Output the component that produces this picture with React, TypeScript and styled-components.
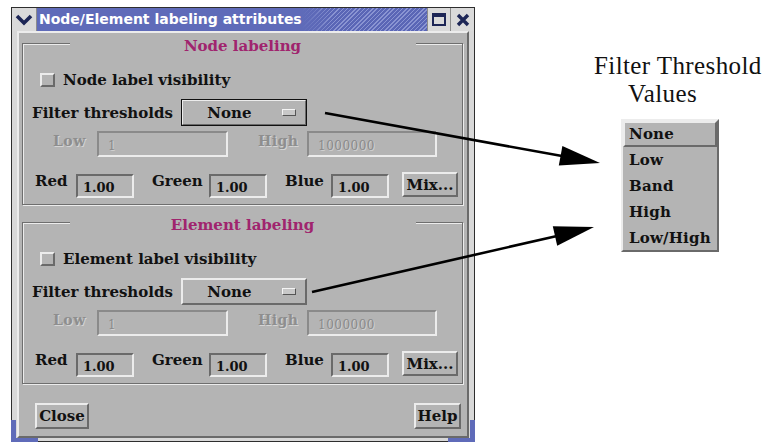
import styled, { createGlobalStyle } from 'styled-components';

const GlobalStyle = createGlobalStyle`
  html, body {
    margin: 0;
    padding: 0;
    background: #ffffff;
  }
  body {
    width: 766px;
    height: 444px;
    overflow: hidden;
  }
`;

const GRAY = '#b4b4b4';
const LIGHT = '#ececec';
const DARK = '#6a6a6a';
const NAVY = '#1d2656';
const BLUE = '#5f6bb9';
const LABEL_FONT = `bold 15px "DejaVu Serif", serif`;

const Page = styled.div`
  position: relative;
  display: flex;
  align-items: flex-start;
  width: 766px;
  height: 444px;
`;

const Window = styled.div`
  position: relative;
  margin: 7px 0 0 11px;
  width: 462px;
  border: 1px solid #2e2e2e;
  background: #d8d8d8;
  &::before,
  &::after {
    content: '';
    position: absolute;
    bottom: -1px;
    width: 27px;
    height: 22px;
    box-sizing: border-box;
    border-bottom: 4px solid ${BLUE};
  }
  &::before {
    left: -1px;
    border-left: 5px solid ${BLUE};
  }
  &::after {
    right: -1px;
    border-right: 5px solid ${BLUE};
  }
`;

const TitleBar = styled.div`
  display: flex;
  height: 23px;
  background: ${BLUE};
`;

const TitleButton = styled.div<{ $w: number; $left?: boolean }>`
  width: ${(p) => p.$w}px;
  flex: none;
  display: flex;
  align-items: center;
  justify-content: center;
  background: #dadada;
  border-left: ${(p) => (p.$left ? 'none' : '1px solid #8c8c8c')};
  border-right: ${(p) => (p.$left ? '1px solid #8c8c8c' : 'none')};
`;

const TitleText = styled.div`
  padding-left: 2px;
  color: #ffffff;
  font: bold 14px 'DejaVu Sans', sans-serif;
  line-height: 23px;
  white-space: nowrap;
  background: ${BLUE};
`;

const Hatch = styled.div`
  flex: 1;
  background: linear-gradient(90deg, ${BLUE} 0%, rgba(95, 107, 185, 0) 25%),
    repeating-linear-gradient(135deg, #5a66b6 0 2px, #8a94d2 2px 3px);
`;

const Frame = styled.div`
  padding: 0 5px 3px 5px;
`;

const Dialog = styled.div`
  background: ${GRAY};
  border: 2px solid;
  border-color: ${LIGHT} ${DARK} ${DARK} ${LIGHT};
  padding-bottom: 7px;
`;

const Group = styled.section<{ $top: number }>`
  margin: ${(p) => p.$top}px 4px 0 3px;
  border: 1px solid #6e6e6e;
  box-shadow: inset 1px 1px 0 ${LIGHT}, 1px 1px 0 ${LIGHT};
  padding-bottom: 6px;
`;

const GroupTitle = styled.h2`
  margin: -6px auto 0;
  width: 346px;
  background: ${GRAY};
  color: #a0246e;
  font: bold 15px 'DejaVu Serif', serif;
  line-height: 16px;
  text-align: center;
`;

const CheckRow = styled.label`
  display: flex;
  align-items: center;
  gap: 8px;
  height: 20px;
  margin-top: 16px;
  padding-left: 17px;
  font: ${LABEL_FONT};
  color: #111;
`;

const CheckBox = styled.span`
  width: 15px;
  height: 14px;
  box-sizing: border-box;
  border: 2px solid;
  border-color: ${LIGHT} ${DARK} ${DARK} ${LIGHT};
  background: ${GRAY};
`;

const FilterRow = styled.div`
  display: flex;
  align-items: center;
  gap: 8px;
  height: 27px;
  margin-top: 9px;
  padding-left: 9px;
`;

const Label = styled.span`
  font: ${LABEL_FONT};
  color: #111;
  white-space: nowrap;
`;

const OptionButton = styled.div<{ $focused?: boolean }>`
  display: flex;
  align-items: center;
  width: 126px;
  height: 27px;
  box-sizing: border-box;
  border: 2px solid;
  border-color: ${LIGHT} ${DARK} ${DARK} ${LIGHT};
  outline: ${(p) => (p.$focused ? '1px solid #111' : 'none')};
  outline-offset: -1px;
  font: ${LABEL_FONT};
  color: #111;
`;

const OptionText = styled.span`
  flex: 1;
  text-align: center;
  padding-right: 6px;
`;

const OptionMark = styled.span`
  width: 14px;
  height: 7px;
  margin-right: 9px;
  box-sizing: border-box;
  border: 1px solid;
  border-color: #f4f4f4 #555 #555 #f4f4f4;
  background: #c8c8c8;
`;

const RangeRow = styled.div`
  display: flex;
  align-items: center;
  height: 26px;
  margin-top: 5px;
`;

const DimLabel = styled.span<{ $w: number; $ml: number }>`
  width: ${(p) => p.$w}px;
  margin-left: ${(p) => p.$ml}px;
  font: bold 14px 'DejaVu Serif', serif;
  color: #8e8e8e;
  text-shadow: 1px 1px 0 #d4d4d4;
  letter-spacing: 0.5px;
  align-self: flex-start;
  margin-top: 2px;
`;

const Field = styled.div<{ $w: number; $h: number; $dim?: boolean }>`
  width: ${(p) => p.$w}px;
  height: ${(p) => p.$h}px;
  box-sizing: border-box;
  display: flex;
  align-items: center;
  padding: 3px 0 0 ${(p) => (p.$dim ? 9 : 5)}px;
  border: 2px solid;
  border-color: ${(p) => (p.$dim ? '#8a8a8a' : DARK)} ${LIGHT} ${LIGHT}
    ${(p) => (p.$dim ? '#8a8a8a' : DARK)};
  font: ${(p) => (p.$dim ? '12px' : 'bold 13px')} 'DejaVu Serif', serif;
  color: ${(p) => (p.$dim ? '#8a8a8a' : '#111')};
  text-shadow: ${(p) => (p.$dim ? '1px 1px 0 #d0d0d0' : 'none')};
  letter-spacing: ${(p) => (p.$dim ? '0.5px' : '0')};
`;

const ColorRow = styled.div`
  display: flex;
  height: 26px;
  margin-top: 15px;
  padding-left: 12px;
`;

const ColorLabel = styled.span<{ $w: number; $ml: number }>`
  width: ${(p) => p.$w}px;
  margin-left: ${(p) => p.$ml}px;
  font: ${LABEL_FONT};
  color: #111;
  line-height: 16px;
  margin-top: 1px;
  white-space: nowrap;
`;

const ColorField = styled(Field)`
  align-self: flex-end;
`;

const PushButton = styled.button<{ $w: number; $h?: number; $ml?: number }>`
  width: ${(p) => p.$w}px;
  height: ${(p) => p.$h ?? 25}px;
  margin-left: ${(p) => p.$ml ?? 0}px;
  padding: 0;
  box-sizing: border-box;
  background: ${GRAY};
  border: 2px solid;
  border-color: ${LIGHT} ${DARK} ${DARK} ${LIGHT};
  font: ${LABEL_FONT};
  color: #111;
  white-space: nowrap;
`;

const ActionBar = styled.div`
  display: flex;
  justify-content: space-between;
  margin-top: 19px;
  padding: 0 6px 0 16px;
`;

const Side = styled.div`
  margin: 52px 0 0 119px;
`;

const Caption = styled.div`
  font: 25px 'Liberation Serif', serif;
  letter-spacing: 0.4px;
  line-height: 28px;
  color: #111;
  white-space: nowrap;
`;

const CaptionLine = styled.div<{ $indent?: number }>`
  padding-left: ${(p) => p.$indent ?? 0}px;
`;

const Menu = styled.ul`
  list-style: none;
  margin: 11px 0 0 27px;
  padding: 0;
  width: 98px;
  box-sizing: border-box;
  background: ${GRAY};
  border: 2px solid;
  border-color: ${LIGHT} ${DARK} ${DARK} ${LIGHT};
`;

const MenuItem = styled.li<{ $active?: boolean; $h?: number }>`
  height: ${(p) => p.$h ?? 26}px;
  box-sizing: border-box;
  display: flex;
  align-items: center;
  padding-left: ${(p) => (p.$active ? 4 : 6)}px;
  font: ${LABEL_FONT};
  letter-spacing: 0.2px;
  color: #111;
  border: ${(p) => (p.$active ? '2px solid' : 'none')};
  border-color: ${LIGHT} ${DARK} ${DARK} ${LIGHT};
`;

const Arrows = styled.svg`
  position: absolute;
  left: 0;
  top: 0;
  pointer-events: none;
`;

type GroupProps = {
  title: string;
  check: string;
  top: number;
  focused?: boolean;
};

function LabelGroup({ title, check, top, focused }: GroupProps) {
  return (
    <Group $top={top}>
      <GroupTitle>{title}</GroupTitle>
      <CheckRow>
        <CheckBox />
        {check}
      </CheckRow>
      <FilterRow>
        <Label>Filter thresholds</Label>
        <OptionButton $focused={focused}>
          <OptionText>None</OptionText>
          <OptionMark />
        </OptionButton>
      </FilterRow>
      <RangeRow>
        <DimLabel $w={44} $ml={30}>Low</DimLabel>
        <Field $w={131} $h={26} $dim>
          1
        </Field>
        <DimLabel $w={49} $ml={30}>High</DimLabel>
        <Field $w={130} $h={26} $dim>
          1000000
        </Field>
      </RangeRow>
      <ColorRow>
        <ColorLabel $w={41} $ml={0}>Red</ColorLabel>
        <ColorField $w={58} $h={24}>1.00</ColorField>
        <ColorLabel $w={57} $ml={18}>Green</ColorLabel>
        <ColorField $w={58} $h={24}>1.00</ColorField>
        <ColorLabel $w={46} $ml={18}>Blue</ColorLabel>
        <ColorField $w={58} $h={24}>1.00</ColorField>
        <PushButton $w={56} $ml={13}>
          Mix...
        </PushButton>
      </ColorRow>
    </Group>
  );
}

export default function App() {
  return (
    <Page>
      <GlobalStyle />
      <Window>
        <TitleBar>
          <TitleButton $w={24} $left>
            <svg width='18' height='12' viewBox='0 0 18 12'>
              <polyline
                points='2,2 9,9 16,2'
                fill='none'
                stroke={NAVY}
                strokeWidth='3.6'
              />
            </svg>
          </TitleButton>
          <TitleText>Node/Element labeling attributes</TitleText>
          <Hatch />
          <TitleButton $w={22}>
            <svg width='14' height='13' viewBox='0 0 14 13'>
              <rect x='1' y='1' width='12' height='11' fill='none' stroke={NAVY} strokeWidth='2' />
              <rect x='1' y='1' width='12' height='3' fill={NAVY} />
            </svg>
          </TitleButton>
          <TitleButton $w={23}>
            <svg width='14' height='14' viewBox='0 0 14 14'>
              <path d='M2 2 L12 12 M12 2 L2 12' stroke={NAVY} strokeWidth='3.4' />
            </svg>
          </TitleButton>
        </TitleBar>
        <Frame>
          <Dialog>
            <LabelGroup
              title='Node labeling'
              check='Node label visibility'
              top={10}
              focused
            />
            <LabelGroup
              title='Element labeling'
              check='Element label visibility'
              top={17}
            />
            <ActionBar>
              <PushButton $w={54} $h={26}>
                Close
              </PushButton>
              <PushButton $w={47} $h={26}>
                Help
              </PushButton>
            </ActionBar>
          </Dialog>
        </Frame>
      </Window>
      <Side>
        <Caption>
          <CaptionLine>Filter Threshold</CaptionLine>
          <CaptionLine $indent={34}>Values</CaptionLine>
        </Caption>
        <Menu>
          <MenuItem $active>None</MenuItem>
          <MenuItem>Low</MenuItem>
          <MenuItem>Band</MenuItem>
          <MenuItem>High</MenuItem>
          <MenuItem $h={25}>Low/High</MenuItem>
        </Menu>
      </Side>
      <Arrows width='766' height='444' viewBox='0 0 766 444'>
        <line x1='325' y1='113' x2='562' y2='156' stroke='#000' strokeWidth='2.6' />
        <polygon points='600,163 562.4,146 558.8,165.6' fill='#000' />
        <line x1='312' y1='292' x2='557' y2='236' stroke='#000' strokeWidth='2.6' />
        <polygon points='594,227 552.8,226.3 557.2,245.7' fill='#000' />
      </Arrows>
    </Page>
  );
}
